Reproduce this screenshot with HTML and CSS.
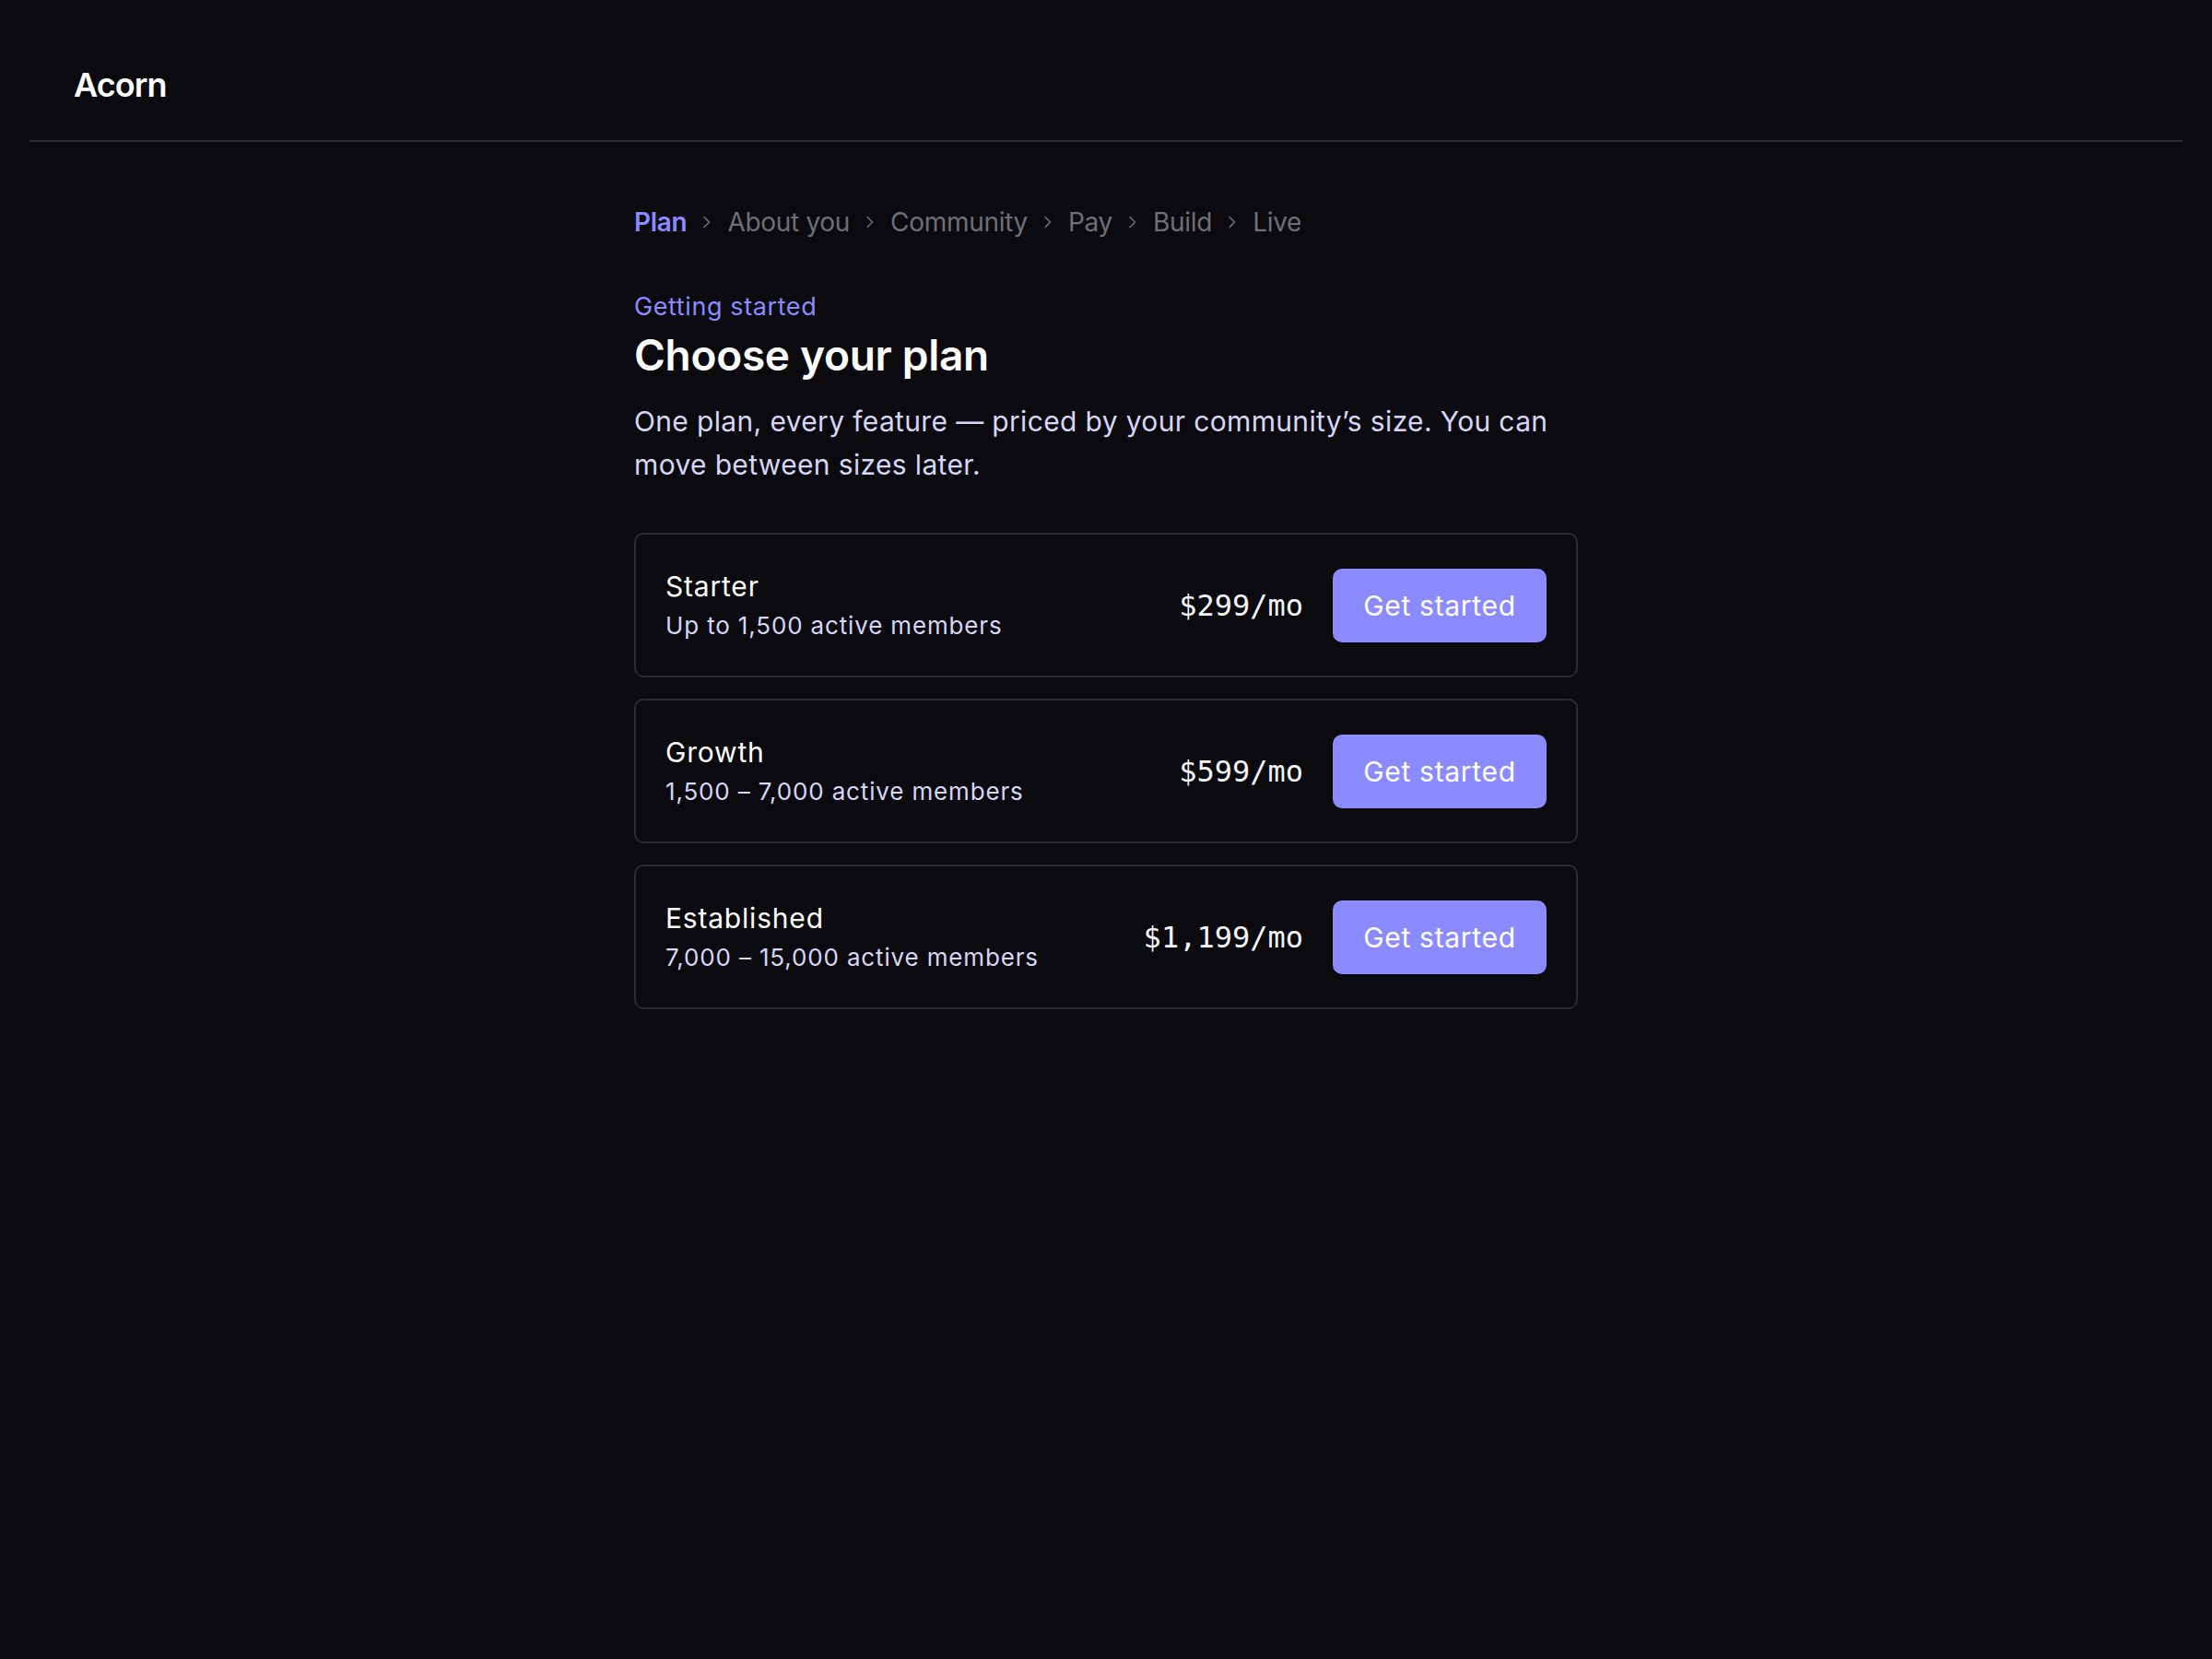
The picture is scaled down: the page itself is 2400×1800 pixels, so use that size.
FILE: index.html
```html
<!DOCTYPE html>
<html lang="en">
<head>
<meta charset="utf-8">
<title>Acorn — Choose your plan</title>
<link rel="stylesheet" href="styles.css">
</head>
<body>
  <header class="site-header">
    <span class="brand">Acorn</span>
  </header>

  <main class="page">
    <nav class="steps" aria-label="Progress">
      <span class="step step-current">Plan</span>
      <svg class="chev" viewBox="0 0 20 20" aria-hidden="true"><path d="M7 4.5 L12.5 10 L7 15.5"/></svg>
      <span class="step">About you</span>
      <svg class="chev" viewBox="0 0 20 20" aria-hidden="true"><path d="M7 4.5 L12.5 10 L7 15.5"/></svg>
      <span class="step">Community</span>
      <svg class="chev" viewBox="0 0 20 20" aria-hidden="true"><path d="M7 4.5 L12.5 10 L7 15.5"/></svg>
      <span class="step">Pay</span>
      <svg class="chev" viewBox="0 0 20 20" aria-hidden="true"><path d="M7 4.5 L12.5 10 L7 15.5"/></svg>
      <span class="step">Build</span>
      <svg class="chev" viewBox="0 0 20 20" aria-hidden="true"><path d="M7 4.5 L12.5 10 L7 15.5"/></svg>
      <span class="step">Live</span>
    </nav>

    <p class="eyebrow">Getting started</p>
    <h1 class="title">Choose your plan</h1>
    <p class="lede">One plan, every feature — priced by your community’s size. You can move between sizes later.</p>

    <ul class="plans">
      <li class="plan">
        <div class="plan-info">
          <span class="plan-name">Starter</span>
          <span class="plan-size">Up to 1,500 active members</span>
        </div>
        <span class="plan-price">$299/mo</span>
        <button class="plan-btn" type="button">Get started</button>
      </li>
      <li class="plan">
        <div class="plan-info">
          <span class="plan-name">Growth</span>
          <span class="plan-size">1,500 – 7,000 active members</span>
        </div>
        <span class="plan-price">$599/mo</span>
        <button class="plan-btn" type="button">Get started</button>
      </li>
      <li class="plan">
        <div class="plan-info">
          <span class="plan-name">Established</span>
          <span class="plan-size">7,000 – 15,000 active members</span>
        </div>
        <span class="plan-price">$1,199/mo</span>
        <button class="plan-btn" type="button">Get started</button>
      </li>
    </ul>
  </main>
</body>
</html>
```

FILE: styles.css
```css
* {
  box-sizing: border-box;
}

html,
body {
  margin: 0;
  padding: 0;
  background: #0a0a0f;
  min-height: 100%;
}

body {
  font-family: Inter, "Noto Sans", "Liberation Sans", sans-serif;
  color: #f4f4f8;
  min-height: 1800px;
}

/* top bar */
.site-header {
  margin: 0 32px;
  padding: 70px 48px 38px;
  border-bottom: 2px solid #2a2a31;
}

.brand {
  display: block;
  font-size: 36px;
  line-height: 44px;
  font-weight: 600;
  color: #ffffff;
  letter-spacing: -0.9px;
}

/* content column */
.page {
  max-width: 1024px;
  margin: 0 auto;
  padding: 66px 0 80px;
}

/* step breadcrumb */
.steps {
  display: flex;
  align-items: center;
  gap: 12px;
  font-size: 28px;
  line-height: 42px;
  color: #6f6f76;
  letter-spacing: -0.3px;
}

.step-current {
  color: #8b8bff;
  font-weight: 600;
}

.chev {
  width: 20px;
  height: 20px;
  flex: none;
}

.chev path {
  fill: none;
  stroke: #6f6f76;
  stroke-width: 1.6;
  stroke-linecap: round;
  stroke-linejoin: round;
}

.eyebrow {
  margin: 53px 0 0;
  font-size: 27px;
  line-height: 36px;
  color: #8b8bff;
  letter-spacing: 0.6px;
}

.title {
  margin: 7px 0 0;
  font-size: 46px;
  line-height: 55px;
  font-weight: 600;
  color: #ffffff;
  letter-spacing: -0.3px;
}

.lede {
  margin: 21px 0 0;
  max-width: 1010px;
  font-size: 30px;
  line-height: 47px;
  color: #d6d6f6;
  letter-spacing: 0.35px;
}

/* plan list */
.plans {
  list-style: none;
  margin: 50px 0 0;
  padding: 0;
  display: flex;
  flex-direction: column;
  gap: 23px;
}

.plan {
  display: flex;
  align-items: center;
  gap: 32px;
  padding: 36px 32px;
  border: 2px solid #2a2a31;
  border-radius: 10px;
}

.plan-info {
  flex: 1;
  display: flex;
  flex-direction: column;
  gap: 5px;
}

.plan-name {
  font-size: 30px;
  line-height: 40px;
  font-weight: 400;
  color: #ffffff;
  letter-spacing: 0.8px;
}

.plan-size {
  font-size: 26px;
  line-height: 36px;
  color: #d6d6f6;
  letter-spacing: 0.85px;
}

.plan-price {
  font-family: "DejaVu Sans Mono", "Liberation Mono", monospace;
  font-size: 32px;
  color: #f4f4f8;
  white-space: nowrap;
}

.plan-btn {
  flex: none;
  width: 232px;
  height: 80px;
  border: 0;
  border-radius: 10px;
  background: #8b8bff;
  color: #ffffff;
  font-family: inherit;
  font-size: 30px;
  font-weight: 400;
  letter-spacing: 0.7px;
  cursor: pointer;
}
```
